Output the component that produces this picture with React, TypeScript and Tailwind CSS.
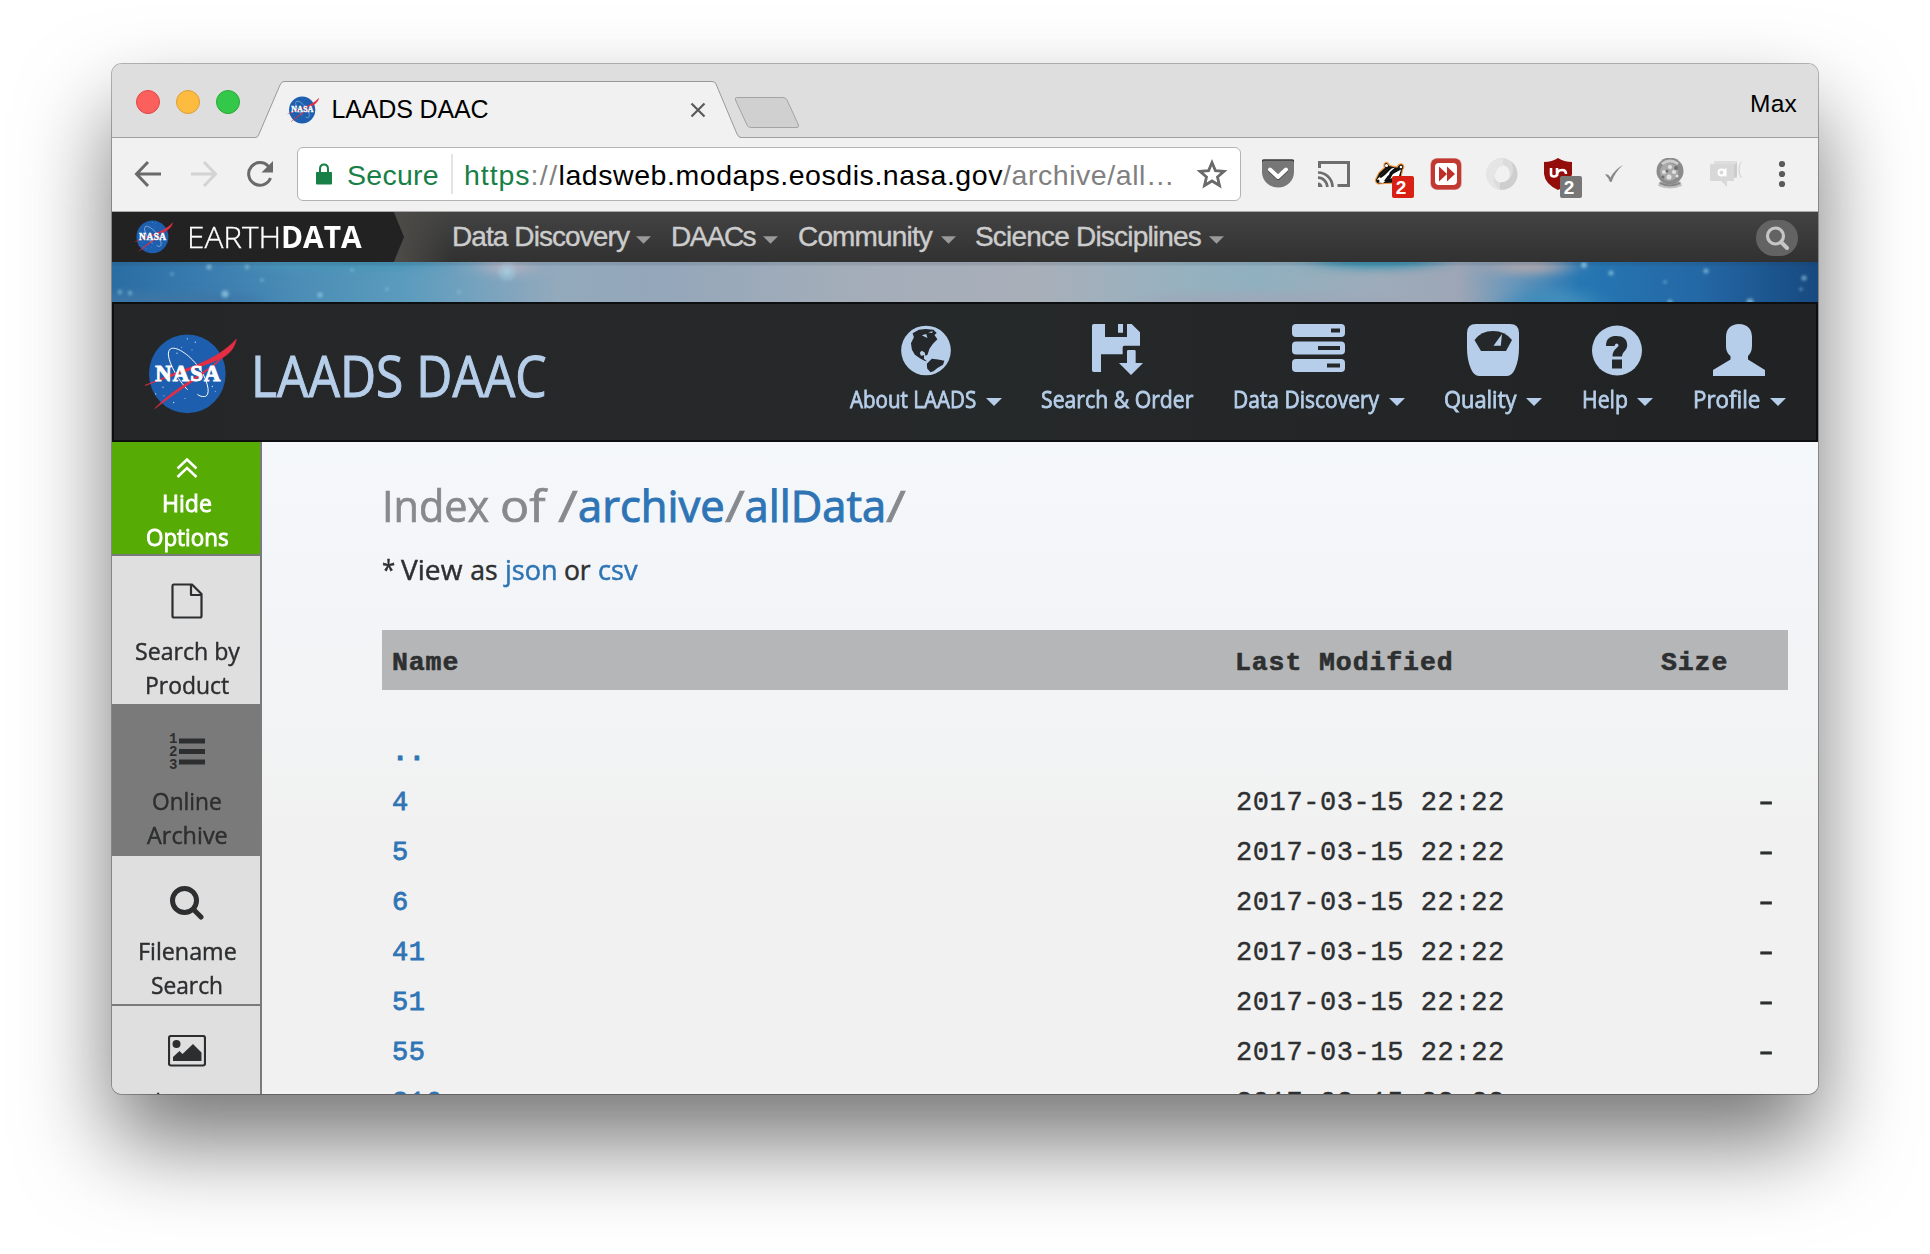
import React, { useLayoutEffect, useRef } from "react";

const humanist = "font-['Open_Sans','Noto_Sans',sans-serif]";
const arial = "font-['Liberation_Sans',Arial,sans-serif]";
const mono = "font-['Liberation_Mono','Courier_New',monospace]";

/** One line of text whose tracking is adjusted so that it fills `w` pixels. */
function Fit({ w, className = "", children }: { w: number; className?: string; children: string }) {
  const ref = useRef<HTMLSpanElement>(null);
  useLayoutEffect(() => {
    const el = ref.current;
    if (!el) return;
    el.style.letterSpacing = "0px";
    const natural = el.getBoundingClientRect().width;
    el.style.letterSpacing = `${(w - natural) / Math.max(1, children.length)}px`;
  }, [w, children]);
  return (
    <span ref={ref} className={`inline-block whitespace-pre ${className}`}>
      {children}
    </span>
  );
}

/** One line of text condensed horizontally so that it fills `w` pixels. */
function Condensed({ w, className = "", children }: { w: number; className?: string; children: string }) {
  const ref = useRef<HTMLSpanElement>(null);
  useLayoutEffect(() => {
    const el = ref.current;
    if (!el) return;
    el.style.transform = `scaleX(${w / el.offsetWidth})`;
    el.style.marginRight = `${w - el.offsetWidth}px`;
  }, [w, children]);
  return (
    <span ref={ref} className={`inline-block origin-left whitespace-pre ${className}`}>
      {children}
    </span>
  );
}

function NasaLogo({ className = "" }: { className?: string }) {
  return (
    <svg viewBox="130 130 285 245" className={`shrink-0 ${className}`}>
      <ellipse cx="263" cy="252" rx="115" ry="118" fill="#1d5fae" />
      <g fill="#cfe0f5">
        <circle cx="263" cy="147" r="2" /><circle cx="287" cy="157" r="2" /><circle cx="232" cy="190" r="2" />
        <circle cx="277" cy="180" r="1.5" /><circle cx="246" cy="172" r="1.5" /><circle cx="190" cy="292" r="2" />
        <circle cx="168" cy="312" r="2" /><circle cx="222" cy="338" r="2" /><circle cx="193" cy="318" r="1.5" />
        <circle cx="338" cy="290" r="2" /><circle cx="347" cy="304" r="1.5" /><circle cx="256" cy="326" r="1.5" />
      </g>
      <path d="M264 300C236 272 200 210 207 185C214 160 262 185 297 232C325 270 335 318 315 320C306 321 298 318 293 313" fill="none" stroke="#fff" strokeWidth="3" />
      <path d="M136 287L200 260C260 234 350 214 410 148C404 176 388 192 370 202C330 224 215 258 136 287Z" fill="#e52d43" stroke="#e52d43" strokeWidth="2" />
      <path d="M166 356C220 296 300 262 376 196C340 238 232 304 166 356Z" fill="#e52d43" stroke="#e52d43" strokeWidth="2" />
      <text x="167" y="274" textLength="195" lengthAdjust="spacing" className="font-['Liberation_Serif',serif] text-[68px] font-bold" fill="#fff" stroke="#fff" strokeWidth="3">NASA</text>
    </svg>
  );
}

function Caret({ className = "" }: { className?: string }) {
  return (
    <svg viewBox="0 0 16 8" className={`h-2 w-4 shrink-0 ${className}`} fill="currentColor">
      <path d="M0 0H16L8 8Z" />
    </svg>
  );
}

function TabStrip() {
  return (
    <div className="relative flex h-[74px] bg-[#dedede]">
      <div className="absolute inset-x-0 bottom-0 h-px bg-[#a0a0a0]" />
      <div className="ml-6 mt-[26px] flex h-6 gap-4">
        <span className="size-6 rounded-full border border-[#df4744] bg-[#fc605c]" />
        <span className="size-6 rounded-full border border-[#de9f34] bg-[#fdbc40]" />
        <span className="size-6 rounded-full border border-[#27aa35] bg-[#34c84a]" />
      </div>
      <div className="relative ml-4 flex h-[74px] w-[486px] items-start">
        <svg viewBox="0 0 486 57" className="absolute bottom-0 left-0 h-[57px] w-[486px]">
          <path d="M0 56.500Q2 56 3 53L24 4Q25.500 .5 28 .5H456Q459 .5 460 3L481 53Q482.500 56.500 485 56.500V57H0Z" fill="#f1f1f1" />
          <path d="M0 56.500Q2 56 3 53L24 4Q25.500 .5 28 .5H456Q459 .5 460 3L481 53Q482.500 56.500 485 56.500" fill="none" stroke="#999" />
        </svg>
        <NasaLogo className="relative ml-[31px] mt-8 h-[28px] w-[32.5px]" />
        <div className={`relative ml-[12px] mt-[29px] w-[358px] text-[25px] leading-8 text-black ${arial}`}>
          <Fit w={157}>LAADS DAAC</Fit>
        </div>
        <svg viewBox="0 0 16 16" className="relative mt-[38px] size-4" stroke="#5a5a5a" strokeWidth="2.2">
          <path d="M1.500 1.500L14.500 14.500M14.500 1.500L1.500 14.500" />
        </svg>
      </div>
      <svg viewBox="0 0 66 33" className="-ml-2 mt-8 h-[33px] w-[66px]">
        <path d="M2.500 1.500H49Q52 1.500 53 4L64.500 29Q65 31.500 63 31.500H17Q14 31.500 13 29L1.500 4Q1 1.500 2.500 1.500Z" fill="#d0d0d0" stroke="#a3a3a3" />
      </svg>
      <div className={`ml-auto mr-[21px] mt-[24px] text-[24.500px] leading-8 text-black ${arial}`}>
        <Fit w={47}>Max</Fit>
      </div>
    </div>
  );
}

function Extensions() {
  return (
    <div className="ml-[21px] flex items-center gap-6">
      <svg viewBox="0 0 32 32" className="size-8">
        <path d="M0 4Q0 2 2 2H30Q32 2 32 4V14A16 15.500 0 0 1 0 14Z" fill="#777" />
        <path d="M0 4Q0 2 2 2H30Q32 2 32 4" fill="none" stroke="#3c3c3c" strokeWidth="1.500" />
        <path d="M8 12.500L16 20L24 12.500" fill="none" stroke="#444" strokeWidth="4" strokeLinecap="round" strokeLinejoin="round" />
        <path d="M8 11.500L16 19L24 11.500" fill="none" stroke="#fff" strokeWidth="4" strokeLinecap="round" strokeLinejoin="round" />
      </svg>
      <svg viewBox="0 0 32 32" className="size-8" fill="none" stroke="#6e6e6e" strokeWidth="3">
        <path d="M1.500 10V4.500H30.500V27.500H19.500" />
        <path d="M0 14.500A14.500 14.500 0 0 1 14.500 29M0 19.700A9.300 9.300 0 0 1 9.300 29" strokeWidth="2.700" />
        <path d="M0 24.500A4.500 4.500 0 0 1 4.500 29H0Z" fill="#6e6e6e" stroke="none" />
      </svg>
      <span className="relative size-8">
        <svg viewBox="0 0 32 32" className="size-8">
          <path d="M1.500 21.500L5 14.500L10.500 9.500Q9 6 11.500 4.500Q14 4 15.500 7.500L23 9Q25 5 28 6Q31.500 8 28.500 12L27 20L20 25L4 26Q1 24 1.500 21.500Z" fill="#111" stroke="#f49a3c" strokeWidth="1.200" />
          <path d="M3 21.500L12 12L21 9.500L16 14L13 22L9 25L4.500 24.500Z" fill="#fff" />
          <path d="M5 19L12 11.500L18 10L11 17L7 20Z" fill="#111" />
          <path d="M15 21L19 16L27 11.500L25 18Z" fill="#fff" />
          <path d="M10 23L13.500 18L19 14.500L17 19.500L13 24Z" fill="#111" />
          <circle cx="12.500" cy="7.500" r="1.500" fill="#fff" /><circle cx="27" cy="9" r="1.300" fill="#fff" />
          <circle cx="4" cy="23" r="1.500" fill="#111" />
        </svg>
        <span className={`absolute left-[18px] top-[18px] flex h-[22px] w-[22px] items-center justify-center rounded-xs bg-[#d82114] pr-1 text-[19px] leading-none font-bold text-white ${arial}`}>2</span>
      </span>
      <svg viewBox="0 0 32 32" className="size-8">
        <rect width="32" height="32" rx="7" fill="#e4b0ac" />
        <rect x="1" y="0.500" width="30" height="31" rx="6" fill="#c03a33" />
        <rect x="5" y="5" width="22" height="22" rx="4" fill="#fff" />
        <path d="M9 8.500L17 16L9 23.500ZM17 8.500L25 16L17 23.500Z" fill="#bd302a" />
      </svg>
      <svg viewBox="0 0 32 32" className="size-8" fill="none">
        <ellipse cx="16" cy="16" rx="11.500" ry="12.500" stroke="#dcdcdc" strokeWidth="7" />
        <path d="M17 .5A15.500 15.500 0 0 0 14 31.500C5 26 6 14 17 8" fill="#e5e5e5" />
        <path d="M14 31.500A15.500 15.500 0 0 0 25 3.500C30 14 25 24 14 24.500" fill="#cecece" />
        <ellipse cx="16.500" cy="16" rx="6.500" ry="8" fill="#f1f1f1" />
      </svg>
      <span className="relative size-8">
        <svg viewBox="0 0 32 32" className="size-8">
          <path d="M16 0Q22 4 30 4V16Q29 26 16 32Q3 26 2 16V4Q10 4 16 0Z" fill="#930d0a" />
          <path d="M9 10V16Q9 18.500 12 18.500Q15 18.500 15 16V10M15 18Q15 12 20 12Q24 12 24 16" fill="none" stroke="#fff" strokeWidth="2.600" />
        </svg>
        <span className={`absolute left-[18px] top-[18px] flex h-[22px] w-[22px] items-center justify-center rounded-xs bg-[#777] pr-1 text-[19px] leading-none font-bold text-white ${arial}`}>2</span>
      </span>
      <svg viewBox="0 0 32 32" className="size-8">
        <path d="M7 16.500Q10 15 12.500 19.500Q17 11 25 7Q17 14 13.500 24H12Q10 19 7 16.500Z" fill="#8a8a8a" />
      </svg>
      <svg viewBox="0 0 32 32" className="size-8">
        <path d="M5 24Q16 19 27 24L28 28Q16 33 4 28Z" fill="#c4c4c4" />
        <path d="M6 25Q16 30 26 25" fill="none" stroke="#888" strokeWidth="2" />
        <circle cx="16" cy="13" r="13.500" fill="#8c8c8c" />
        <circle cx="15" cy="14" r="9" fill="#a9a9a9" />
        <path d="M8 6Q16 0 24 6" fill="none" stroke="#ccc" strokeWidth="3" />
        <g fill="#e2e2e2"><circle cx="16" cy="9" r="2" /><circle cx="10" cy="14" r="2" /><circle cx="20" cy="14" r="2" /><circle cx="15" cy="19" r="2.500" /><circle cx="23" cy="18" r="1.500" /></g>
        <g fill="#707070"><circle cx="13" cy="13" r="1.500" /><circle cx="22" cy="10" r="2" /><circle cx="9" cy="19" r="1.500" /></g>
      </svg>
      <svg viewBox="0 0 32 32" className="size-8">
        <path d="M4 3H27V20H4Z" fill="#dedede" /><path d="M24 7L27 5V18L24 20Z" fill="#ccc" />
        <path d="M32 3Q27 11 32 20L30 19Q27 11 30 5Z" fill="#d2d2d2" />
        <path d="M1 6H24V23H17V29L11 23H1Q0 23 0 21V8Q0 6 1 6Z" fill="#d8d8d8" />
        <circle cx="11.500" cy="14.500" r="3" fill="none" stroke="#fff" strokeWidth="2" /><path d="M15.500 10.500V18.500" stroke="#fff" strokeWidth="2" />
      </svg>
      <svg viewBox="0 0 32 32" className="size-8" fill="#5a5a5a">
        <circle cx="16" cy="6" r="3.100" /><circle cx="16" cy="16" r="3.100" /><circle cx="16" cy="26" r="3.100" />
      </svg>
    </div>
  );
}

function Toolbar() {
  return (
    <div className="flex h-[74px] border-b border-[#a9a9a9] bg-[#f1f1f1]">
      <div className="flex h-[72px] items-center">
        <svg viewBox="0 0 28 28" className="ml-[22px] size-7" fill="none" stroke="#6a6a6a" strokeWidth="3">
          <path d="M27 14H3M14 2L2.500 14L14 26" />
        </svg>
        <svg viewBox="0 0 28 28" className="ml-7 size-7" fill="none" stroke="#d3d3d3" strokeWidth="3">
          <path d="M1 14H25M14 2L25.500 14L14 26" />
        </svg>
        <svg viewBox="0 0 28 28" className="ml-7 size-7" fill="none" stroke="#6a6a6a" strokeWidth="3">
          <path d="M24.500 18A11.300 11.300 0 1 1 22.500 6.500" />
          <path d="M27 1V12.500H15.500Z" fill="#6a6a6a" stroke="none" />
        </svg>
        <div className={`ml-[23px] flex h-[54px] w-[944px] items-center rounded-md border border-[#b3b3b3] bg-white text-[28.500px] leading-8 ${arial}`}>
          <svg viewBox="0 0 16 22" className="ml-[18px] h-[22px] w-4">
            <rect y="9" width="16" height="12.500" rx="1" fill="#188046" />
            <path d="M4 10V6Q4 1.500 8 1.500Q12 1.500 12 6V10" fill="none" stroke="#188046" strokeWidth="2" />
          </svg>
          <span className="mt-[2px] ml-[15px] w-[94px] text-[#188046]"><Fit w={92}>Secure</Fit></span>
          <span className="ml-[10px] h-10 w-[2px] bg-[#e4e4e4]" />
          <span className="mt-[2px] ml-[11px] flex">
            <Fit w={66.5} className="text-[#188046]">https</Fit>
            <Fit w={28} className="text-[#808080]">://</Fit>
            <Fit w={444.5} className="text-black">ladsweb.modaps.eosdis.nasa.gov</Fit>
            <Fit w={172} className="text-[#808080]">/archive/all…</Fit>
          </span>
          <svg viewBox="0 0 32 32" className="ml-[21px] size-8" fill="none" stroke="#6a6a6a" strokeWidth="2.800">
            <path d="M16 4.500L19.400 12.600L28 13.300L21.500 19L23.500 27.500L16 23L8.500 27.500L10.500 19L4 13.300L12.600 12.600Z" />
          </svg>
        </div>
        <Extensions />
      </div>
    </div>
  );
}

const topLinks = [
  { label: "Data Discovery", w: 177, gap: "ml-[7px]", next: "mr-5" },
  { label: "DAACs", w: 84, gap: "ml-[8px]", next: "mr-5" },
  { label: "Community", w: 134, gap: "ml-[9px]", next: "mr-[19px]" },
  { label: "Science Disciplines", w: 226, gap: "ml-[8px]", next: "" },
];

function EarthdataBar() {
  return (
    <div className={`flex h-[50px] items-center bg-gradient-to-b from-[#434343] to-[#313131] ${arial}`}>
      <div className="flex h-full w-[340px] bg-gradient-to-r from-[#4b4a46] from-85% to-transparent">
        <div className="flex h-full w-[292px] items-center bg-[#222] pl-[22px] [clip-path:polygon(0_0,96.5%_0,100%_50%,96.5%_100%,0_100%)]">
          <NasaLogo className="h-[34px] w-[39.500px]" />
          <div className="ml-[13px] flex font-['Open_Sans',sans-serif] text-[29.500px] leading-[50px] text-white">
            <Condensed w={94} className="font-light [-webkit-text-stroke:0.3px_white]">EARTH</Condensed>
            <Condensed w={81} className="font-bold">DATA</Condensed>
          </div>
        </div>
      </div>
      <div className="flex text-[28px] leading-[50px] text-[#ccc] [-webkit-text-stroke:0.4px_#ccc]">
        {topLinks.map((l) => (
          <div key={l.label} className={`flex items-center ${l.next}`}>
            <Fit w={l.w}>{l.label}</Fit>
            <Caret className={`mt-[5px] ${l.gap} w-[15px] text-[#999]`} />
          </div>
        ))}
      </div>
      <div className="mr-5 ml-auto mt-[2px] flex h-9 w-[42px] items-center justify-center rounded-[18px] bg-[#636363]">
        <svg viewBox="0 0 24 24" className="size-6" fill="none" stroke="#c6c6c6">
          <circle cx="10.500" cy="10" r="8" strokeWidth="3.200" /><path d="M16 16L22 22" strokeWidth="4" strokeLinecap="round" />
        </svg>
      </div>
    </div>
  );
}

const stars = [
  [8, 30, 2], [18, 31, 2], [97, 5, 2.5], [113, 32, 3.5], [135, 5, 2], [208, 33, 2.5], [150, 18, 1.5], [275, 27, 1.5], [347, 30, 1.5],
  [395, 10, 4], [60, 12, 1.5], [240, 8, 1.5], [1472, 3, 3], [1499, 11, 2.5],
  [1594, 9, 2.5], [1692, 16, 2.5], [1689, 27, 1.5], [1553, 20, 1.5], [1638, 40, 3.5], [1558, 40, 2.5],
];

function SpaceStrip() {
  return (
    <div className="h-10 bg-[linear-gradient(90deg,#2a6da3_0%,#3b7eb0_6%,#4c8db6_11%,#5a9bbd_17%,#79a3be_22%,#93a9bc_26%,#95a7ba_33%,#a3adb9_43%,#a8afb9_54%,#9ab1bf_61%,#8fb0bf_67%,#9dacba_74%,#9da6b6_79%,#6a97ba_82%,#2577b3_86%,#2468a6_93%,#17497f_100%)]">
      <svg viewBox="0 0 1706 40" className="h-10 w-full">
        <defs>
          <filter id="haze" x="-50%" y="-100%" width="200%" height="300%"><feGaussianBlur stdDeviation="16 5" /></filter>
          <filter id="glow"><feGaussianBlur stdDeviation="1.4" /></filter>
        </defs>
        <g filter="url(#haze)">
          <ellipse cx="395" cy="4" rx="20" ry="9" fill="#bdb4c0" />
          <ellipse cx="230" cy="0" rx="100" ry="7" fill="#4795b8" />
          <ellipse cx="60" cy="38" rx="90" ry="7" fill="#3c76a6" />
          <ellipse cx="1265" cy="-2" rx="65" ry="8" fill="#2f8cae" />
          <ellipse cx="1170" cy="40" rx="150" ry="9" fill="#9da8b9" />
          <ellipse cx="1440" cy="42" rx="40" ry="14" fill="#3f8dbb" />
          <ellipse cx="1415" cy="4" rx="40" ry="9" fill="#a9a6ae" />
        </g>
        <rect width="1706" height="3" fill="#1c3345" opacity=".18" filter="url(#glow)" />
        <g filter="url(#glow)" fill="#a5d6ea" opacity=".65">
          {stars.map(([x, y, r], i) => (<circle key={i} cx={x} cy={y} r={r} />))}
          <circle cx="395" cy="10" r="9" opacity=".5" />
        </g>
      </svg>
    </div>
  );
}

const GlobeIcon = () => (
  <svg viewBox="242 75 151 150" className="mt-px h-[51px] w-[50px]">
    <circle cx="317.500" cy="150" r="75" fill="#b6cee9" />
    <path fill="#25282a" d="M277 98L296 87L316 85L340 87L350 97L343 103L352 116L338 130L328 145L322 163L316 166L313 155L304 151L299 157L302 166L312 164L311 175L321 183L313 181L300 174L284 163L275 148L272 128L281 110Z" />
    <path fill="#25282a" d="M320 190L335 175L354 177L373 181L369 193L352 203L340 213L331 216L321 204Z" />
    <path fill="#b6cee9" d="M305 104L318 100L322 112L312 108ZM324 95L338 92L336 97Z" />
  </svg>
);
const SaveIcon = () => (
  <svg viewBox="813 72 153 156" className="h-[52px] w-[51px]" fill="#b6cee9">
    <path d="M813 77Q813 72 818 72H852V111H918V72H932L957 97V137H910Q905 137 905 142V163H840V216H818Q813 216 813 211Z" />
    <path d="M891 72H906V98H891ZM918 154Q918 150 922 150H940Q944 150 944 154V189H966L930 225L894 189H918Z" />
  </svg>
);
const ServerIcon = () => (
  <svg viewBox="0 0 53 52" className="h-[52px] w-[53px]">
    <g fill="#b6cee9"><rect width="53" height="13" rx="4" /><rect y="17.500" width="53" height="13" rx="4" /><rect y="35" width="53" height="13" rx="4" /></g>
    <path fill="#25282a" d="M39 4.500H48V8.500H39ZM26 22H48V26H26ZM35 39.500H48V43.500H35Z" />
  </svg>
);
const ScaleIcon = () => (
  <svg viewBox="0 0 52 52" className="size-[52px]">
    <path fill="#b6cee9" d="M9 0H43Q52 0 52 9V24Q52 36 48 45Q45 52 40 52H12Q7 52 4 45Q0 36 0 24V9Q0 0 9 0Z" />
    <path fill="#25282a" d="M7.500 16Q14 7 26 7Q38 7 45 16L39 27H14Z" /><path fill="#b6cee9" d="M35 10L33.800 21.800H26.500Z" />
  </svg>
);
const HelpIcon = () => (
  <svg viewBox="0 0 50 51" className="h-[52px] w-[50px]">
    <circle cx="25" cy="26" r="25" fill="#b6cee9" />
    <path fill="#25282a" d="M14 21.500C14 14 18 11.500 24.500 11.500C31 11.500 35.200 14.500 35.200 20.500C35.200 26.500 30.500 26.500 30 32H20.500C20.500 25 26 23.500 26.500 21Q26.500 19 24.500 19Q23 19 22.500 21.500ZM20 35H30V44H20Z" />
  </svg>
);
const ProfileIcon = () => (
  <svg viewBox="0 0 52 52" className="size-[52px]" fill="#b6cee9">
    <path d="M26 0C34 0 39 5 39 13V22C39 27 37 30 35 32V35.500L52 46V52H0V46L17.500 35.500V32C15 30 13 27 13 22V13C13 5 18 0 26 0Z" />
  </svg>
);

const mainNav = [
  { label: "About LAADS", w: 126, caret: true, Icon: GlobeIcon },
  { label: "Search & Order", w: 152, caret: false, Icon: SaveIcon },
  { label: "Data Discovery", w: 146, caret: true, Icon: ServerIcon },
  { label: "Quality", w: 72, caret: true, Icon: ScaleIcon },
  { label: "Help", w: 46, caret: true, Icon: HelpIcon },
  { label: "Profile", w: 67, caret: true, Icon: ProfileIcon },
];

function Header() {
  return (
    <header className={`flex h-[140px] items-start border-2 border-[#0c0e10] bg-gradient-to-r from-[#252628] via-[#26292a] to-[#202224] text-[#b6cee9] ${humanist}`}>
      <NasaLogo className="mt-[29px] ml-[29px] h-[82px] w-[95px]" />
      <div className="mt-[39px] ml-[13px] text-[56px] leading-[64px] [-webkit-text-stroke:1.1px_#b6cee9]"><Condensed w={296}>LAADS DAAC</Condensed></div>
      <nav className="mt-5 mr-[30px] ml-auto flex gap-[39.200px]">
        {mainNav.map(({ label, w, caret, Icon }) => (
          <div key={label} className="flex flex-col items-center">
            <div className="flex h-[52px] items-start"><Icon /></div>
            <div className="mt-[7px] flex items-center text-[24px] leading-8 [-webkit-text-stroke:0.8px_#b6cee9]">
              <Condensed w={w}>{label}</Condensed>
              {caret && <Caret className="mt-[5px] ml-[10px]" />}
            </div>
          </div>
        ))}
      </nav>
    </header>
  );
}

function SideItem({ lines, children }: { lines: [string, number][]; children: React.ReactNode }) {
  return (
    <>
      <div className="mb-[8px] flex h-[50px] items-center justify-center">{children}</div>
      {lines.map(([t, w]) => (
        <div key={t} className="flex h-[34px] justify-center"><Condensed w={w}>{t}</Condensed></div>
      ))}
    </>
  );
}

function Sidebar() {
  return (
    <aside className={`w-[150px] shrink-0 border-r-2 border-[#797a7b] bg-[#dfdfe0] text-center text-[24px] leading-[34px] text-[#2d2e2f] [-webkit-text-stroke:0.45px_currentColor] ${humanist}`}>
      <div className="h-[114px] border-b-2 border-[#797a7b] bg-[#56ab04] pt-[15px] pl-[2px] text-white [-webkit-text-stroke:0.9px_white]">
        <svg viewBox="0 0 22 22" className="mx-auto mb-[7px] size-[22px]" fill="none" stroke="#fff" strokeWidth="2.500">
          <path d="M1.500 11.500L11 2.500L20.500 11.500M1.500 20L11 11L20.500 20" />
        </svg>
        <div className="flex h-[34px] justify-center"><Condensed w={50}>Hide</Condensed></div>
        <div className="flex h-[34px] justify-center"><Condensed w={83}>Options</Condensed></div>
      </div>
      <div className="h-[148px] pt-5 pl-[2px]">
        <SideItem lines={[["Search by", 105], ["Product", 84]]}>
          <svg viewBox="0 0 32 36" className="h-9 w-8" fill="none" stroke="#2d2e2f" strokeWidth="2.200" strokeLinejoin="round">
            <path d="M2.500 1.500H21L30.500 11V33Q30.500 34.500 29 34.500H3Q1.500 34.500 1.500 33V3Q1.500 1.500 2.500 1.500ZM20 1.500V12H30" />
          </svg>
        </SideItem>
      </div>
      <div className="-mr-[2px] h-[152px] bg-[#7a7a7a] pt-[22px]">
        <SideItem lines={[["Online", 70], ["Archive", 81]]}>
          <svg viewBox="0 0 36 38" className="h-[38px] w-9" fill="#2d2e2f">
            <path d="M10 6.500H36V11.500H10ZM10 17H36V22H10ZM10 27.500H36V32.500H10Z" />
            <g stroke="none" className="font-['Liberation_Mono',monospace] text-[14px] font-bold">
              <text x="0" y="11">1</text><text x="0" y="24">2</text><text x="0" y="36.500">3</text>
            </g>
          </svg>
        </SideItem>
      </div>
      <div className="h-[150px] border-b-2 border-[#797a7b] pt-5 pl-[2px]">
        <SideItem lines={[["Filename", 99], ["Search", 72]]}>
          <svg viewBox="0 0 34 34" className="mt-[3px] size-[34px]" fill="none" stroke="#2d2e2f">
            <circle cx="14.500" cy="14.500" r="12" strokeWidth="5" /><path d="M23.500 23.500L31 31" strokeWidth="5" strokeLinecap="round" />
          </svg>
        </SideItem>
      </div>
      <div className="h-[150px] pt-5 pl-[2px]">
        <SideItem lines={[["Image", 64]]}>
          <svg viewBox="0 0 38 32" className="h-8 w-[38px]">
            <rect x="1" y="1" width="36" height="29.500" rx="2" fill="none" stroke="#2d2e2f" strokeWidth="2.200" />
            <circle cx="8.500" cy="9" r="4" fill="#2d2e2f" />
            <path d="M5 26V22L11.500 16L14.500 19L25 9L33.500 17.500V26Z" fill="#2d2e2f" />
          </svg>
        </SideItem>
      </div>
    </aside>
  );
}

const rows = ["4", "5", "6", "41", "51", "55", "316"];

function Content() {
  return (
    <main className="flex-1 bg-[linear-gradient(180deg,#f5f8fb_0%,#f3f5f8_20%,#f2f3f4_45%,#f1f1f1_62%)] pr-[30px] pl-[120px] text-[#2d2f30]">
      <h1 className={`mt-[38px] flex text-[43.500px] leading-[52px] text-[#86898e] [-webkit-text-stroke:0.7px_currentColor] ${humanist}`}>
        <Condensed w={118}>Index </Condensed>
        <Condensed w={58}>of </Condensed>
        <Condensed w={20}>/</Condensed>
        <Condensed w={147} className="text-[#2f75b5] [-webkit-text-stroke:1px_#2f75b5]">archive</Condensed>
        <Condensed w={20}>/</Condensed>
        <Condensed w={142} className="text-[#2f75b5] [-webkit-text-stroke:1px_#2f75b5]">allData</Condensed>
        <Condensed w={20}>/</Condensed>
      </h1>
      <p className={`mt-[22px] flex text-[26.500px] leading-8 [-webkit-text-stroke:0.45px_currentColor] ${humanist}`}>
        <Condensed w={19}>* </Condensed>
        <Condensed w={69}>View </Condensed>
        <Condensed w={34}>as </Condensed>
        <Condensed w={53} className="text-[#2f75b5] [-webkit-text-stroke:0.5px_#2f75b5]">json</Condensed>
        <Condensed w={41}> or </Condensed>
        <Condensed w={40} className="text-[#2f75b5] [-webkit-text-stroke:0.5px_#2f75b5]">csv</Condensed>
      </p>
      <div className={`mt-[44px] ${mono}`}>
        <div className="flex h-[60px] bg-[#b5b6b7] px-[10px] pt-[17px] text-[26.500px] leading-8 font-bold [-webkit-text-stroke:0.6px_currentColor]">
          <span className="w-[843px]"><Fit w={67.2}>Name</Fit></span>
          <span className="w-[426px]"><Fit w={218.5}>Last Modified</Fit></span>
          <Fit w={67.2}>Size</Fit>
        </div>
        <div className="mt-[38px] h-[50px] pl-[10px] text-[27px] leading-[50px] font-bold text-[#2f75b5] [-webkit-text-stroke:0.8px_#2f75b5]"><Fit w={33.6}>..</Fit></div>
        {rows.map((r) => (
          <div key={r} className="flex h-[50px] px-[10px] text-[27px] leading-[50px] [-webkit-text-stroke:0.4px_currentColor]">
            <span className="w-[844px] text-[#2f75b5] [-webkit-text-stroke:0.8px_#2f75b5]"><Fit w={r.length * 16.8}>{r}</Fit></span>
            <Fit w={268.8}>2017-03-15 22:22</Fit>
            <span className="mr-[4px] ml-auto scale-x-140 [-webkit-text-stroke:0.9px_currentColor]">-</span>
          </div>
        ))}
      </div>
    </main>
  );
}

export default function App() {
  return (
    <div className="flex h-[1254px] w-[1930px] items-start overflow-hidden bg-white">
      <div className="mt-[64px] ml-[112px] flex h-[1030px] w-[1706px] flex-col overflow-hidden rounded-[10px] shadow-[0_0_0_1px_rgba(0,0,0,0.28),0_48px_90px_rgba(0,0,0,0.54)]">
        <TabStrip />
        <Toolbar />
        <EarthdataBar />
        <SpaceStrip />
        <Header />
        <div className="flex min-h-0 flex-1 overflow-hidden">
          <Sidebar />
          <Content />
        </div>
      </div>
    </div>
  );
}
